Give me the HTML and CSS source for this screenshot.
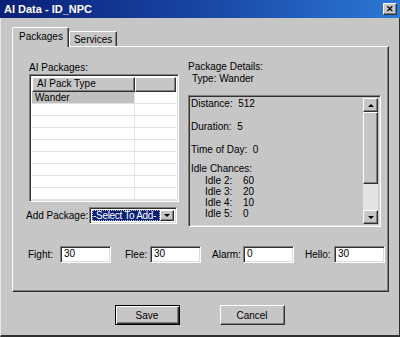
FILE: index.html
```html
<!DOCTYPE html>
<html lang="en">
<head>
    <meta charset="UTF-8">
    <meta name="viewport" content="width=device-width, initial-scale=1.0">
    <title>AI Data - ID_NPC</title>
    <link rel="stylesheet" href="styles.css">
</head>
<body>
    <div class="window">
        <div class="titlebar">
            <span class="title">AI Data - ID_NPC</span>
            <span class="close raised">&#x2715;</span>
        </div>
        <div class="client">
            <div class="tabs">
                <div class="tab active">Packages</div>
                <div class="tab">Services</div>
            </div>
            <div class="panel">
                <div class="columns">
                    <div class="left">
                        <div class="label">AI Packages:</div>
                        <div class="list sunken">
                            <div class="list-head">
                                <div class="col1 head-cell">AI Pack Type</div>
                                <div class="col2 head-cell"></div>
                            </div>
                            <div class="row selected"><div class="col1">Wander</div><div class="col2"></div></div>
                            <div class="row"><div class="col1"></div><div class="col2"></div></div>
                            <div class="row"><div class="col1"></div><div class="col2"></div></div>
                            <div class="row"><div class="col1"></div><div class="col2"></div></div>
                            <div class="row"><div class="col1"></div><div class="col2"></div></div>
                            <div class="row"><div class="col1"></div><div class="col2"></div></div>
                            <div class="row"><div class="col1"></div><div class="col2"></div></div>
                            <div class="row"><div class="col1"></div><div class="col2"></div></div>
                            <div class="row"><div class="col1"></div><div class="col2"></div></div>
                        </div>
                        <div class="add-row">
                            <span class="add-label">Add Package:</span>
                            <div class="combo sunken">
                                <div class="combo-value">-Select To Add-</div>
                                <div class="combo-btn raised"><span class="arrow-down"></span></div>
                            </div>
                        </div>
                    </div>
                    <div class="right">
                        <div class="details-head">
                            <div>Package Details:</div>
                            <div class="indent">Type: Wander</div>
                        </div>
                        <div class="details sunken">
                            <div class="details-text">
                                <div class="line">Distance:&nbsp; 512</div>
                                <div class="line gap">Duration:&nbsp; 5</div>
                                <div class="line gap">Time of Day:&nbsp; 0</div>
                                <div class="line gap-small">Idle Chances:</div>
                                <div class="idle"><span>Idle 2:</span><span>60</span></div>
                                <div class="idle"><span>Idle 3:</span><span>20</span></div>
                                <div class="idle"><span>Idle 4:</span><span>10</span></div>
                                <div class="idle"><span>Idle 5:</span><span>0</span></div>
                            </div>
                            <div class="scrollbar">
                                <div class="scroll-btn raised"><span class="arrow-up"></span></div>
                                <div class="scroll-thumb raised"></div>
                                <div class="scroll-track"></div>
                                <div class="scroll-btn raised"><span class="arrow-down"></span></div>
                            </div>
                        </div>
                    </div>
                </div>
                <div class="fields">
                    <div class="field fight"><span>Fight:</span><div class="input sunken">30</div></div>
                    <div class="field flee"><span>Flee:</span><div class="input sunken">30</div></div>
                    <div class="field alarm"><span>Alarm:</span><div class="input sunken">0</div></div>
                    <div class="field hello"><span>Hello:</span><div class="input sunken">30</div></div>
                </div>
            </div>
            <div class="buttons">
                <div class="button default">Save</div>
                <div class="button raised">Cancel</div>
            </div>
        </div>
    </div>
</body>
</html>
```
FILE: styles.css
```css
* {
    box-sizing: border-box;
}
body {
    margin: 0;
    font-family: "Liberation Sans", Arial, sans-serif;
    font-size: 10px;
    color: #000;
    background-color: #c6c6c6;
    white-space: nowrap;
}
.window {
    width: 400px;
    height: 337px;
    background-color: #c6c6c6;
    border-left: 1px solid #e8e8e8;
    border-right: 1px solid #303030;
    border-bottom: 2px solid #303030;
}
.raised {
    border-top: 1px solid #fff;
    border-left: 1px solid #fff;
    border-right: 1px solid #303030;
    border-bottom: 1px solid #303030;
    box-shadow: inset -1px -1px #808080;
    background-color: #c6c6c6;
}
.sunken {
    border-top: 1px solid #808080;
    border-left: 1px solid #808080;
    border-right: 1px solid #fff;
    border-bottom: 1px solid #fff;
    box-shadow: inset 1px 1px #303030, inset -1px -1px #dcdcdc;
}

/* title bar */
.titlebar {
    height: 18px;
    margin-left: -1px;
    margin-right: -1px;
    display: flex;
    align-items: center;
    justify-content: space-between;
    padding: 0 3px 0 4px;
    background: linear-gradient(90deg, #0a1f78 0%, #1a4aa8 55%, #2c78d6 100%);
    color: #fff;
}
.title {
    font-weight: bold;
    font-size: 11px;
}
.close {
    width: 14px;
    height: 12px;
    display: flex;
    align-items: center;
    justify-content: center;
    color: #000;
    font-size: 9px;
    font-weight: bold;
    line-height: 1;
}

/* client area */
.client {
    padding: 9px 10px 0 11px;
}
.tabs {
    display: flex;
    align-items: flex-end;
    height: 19px;
    padding-left: 1px;
}
.tab {
    height: 15px;
    padding: 0 4px;
    border-top: 1px solid #fff;
    border-left: 1px solid #fff;
    border-right: 1px solid #303030;
    box-shadow: inset -1px 0 #808080;
    border-radius: 2px 2px 0 0;
    display: flex;
    align-items: center;
}
.tab.active {
    height: 20px;
    margin-bottom: -1px;
    margin-left: -1px;
    padding: 0 5px 2px 6px;
    position: relative;
    z-index: 1;
    background-color: #c6c6c6;
}
.panel {
    height: 246px;
    border-top: 1px solid #fff;
    border-left: 1px solid #fff;
    border-right: 1px solid #303030;
    border-bottom: 1px solid #303030;
    box-shadow: inset -1px -1px #808080;
    padding: 14px 0 0 13px;
}
.columns {
    display: flex;
}
.left {
    width: 153px;
    margin-left: 3px;
}
.label {
    height: 13px;
    line-height: 13px;
}
.list {
    width: 150px;
    height: 128px;
    background-color: #fff;
    padding: 2px;
    overflow: hidden;
}
.list-head {
    display: flex;
    height: 15px;
}
.head-cell {
    background-color: #c6c6c6;
    border-top: 1px solid #fff;
    border-left: 1px solid #fff;
    border-right: 1px solid #303030;
    border-bottom: 1px solid #303030;
    box-shadow: inset -1px -1px #808080;
    padding-left: 4px;
    line-height: 12px;
}
.col1 {
    width: 103px;
}
.col2 {
    flex: 1;
}
.row {
    display: flex;
    height: 12px;
    border-bottom: 1px solid #e2e2e2;
}
.row .col1 {
    border-right: 1px solid #e2e2e2;
    padding-left: 3px;
    line-height: 12px;
}
.row.selected .col1 {
    background-color: #c0c0c0;
}
.add-row {
    display: flex;
    align-items: center;
    margin-top: 5px;
    margin-left: -3px;
}
.add-label {
    width: 63px;
}
.combo {
    width: 88px;
    height: 17px;
    display: flex;
    padding: 2px;
    background-color: #fff;
}
.combo-value {
    flex: 1;
    background-color: #0a1f78;
    color: #fff;
    padding: 0 0 0 1px;
    line-height: 11px;
    letter-spacing: -0.3px;
    outline: 1px dotted #c6c6c6;
    outline-offset: -1px;
}
.combo-btn {
    width: 14px;
    display: flex;
    align-items: center;
    justify-content: center;
}
.arrow-down {
    width: 0;
    height: 0;
    border-left: 3px solid transparent;
    border-right: 3px solid transparent;
    border-top: 3px solid #000;
}
.arrow-up {
    width: 0;
    height: 0;
    border-left: 3px solid transparent;
    border-right: 3px solid transparent;
    border-bottom: 3px solid #000;
}
.right {
    width: 193px;
    margin-left: 6px;
}
.details-head {
    line-height: 12px;
    height: 24px;
    margin-bottom: 10px;
}
.indent {
    padding-left: 4px;
}
.details {
    height: 132px;
    display: flex;
    padding: 2px;
}
.details-text {
    flex: 1;
}
.line {
    line-height: 12px;
}
.line.gap {
    margin-top: 11px;
}
.line.gap-small {
    margin-top: 7px;
}
.idle {
    display: flex;
    line-height: 11px;
    padding-left: 14px;
}
.idle span:first-child {
    width: 38px;
}
.scrollbar {
    width: 15px;
    display: flex;
    flex-direction: column;
}
.scroll-btn {
    height: 14px;
    display: flex;
    align-items: center;
    justify-content: center;
}
.scroll-thumb {
    height: 72px;
}
.scroll-track {
    flex: 1;
    background-color: #e4e4e4;
}

/* bottom fields */
.fields {
    display: flex;
    margin-top: 19px;
    margin-left: 2px;
}
.field {
    display: flex;
    align-items: center;
    justify-content: space-between;
}
.fight {
    width: 83px;
}
.flee {
    width: 76px;
    margin-left: 14px;
}
.alarm {
    width: 82px;
    margin-left: 11px;
}
.hello {
    width: 80px;
    margin-left: 11px;
}
.input {
    width: 51px;
    height: 17px;
    background-color: #fff;
    padding: 1px 3px;
    line-height: 12px;
}

/* buttons */
.buttons {
    display: flex;
    justify-content: center;
    gap: 40px;
    margin-top: 13px;
    padding-right: 2px;
}
.button {
    width: 65px;
    height: 20px;
    display: flex;
    align-items: center;
    justify-content: center;
}
.button.default {
    border: 1px solid #000;
    box-shadow: inset 1px 1px #fff, inset -1px -1px #303030, inset -2px -2px #808080;
}
```
